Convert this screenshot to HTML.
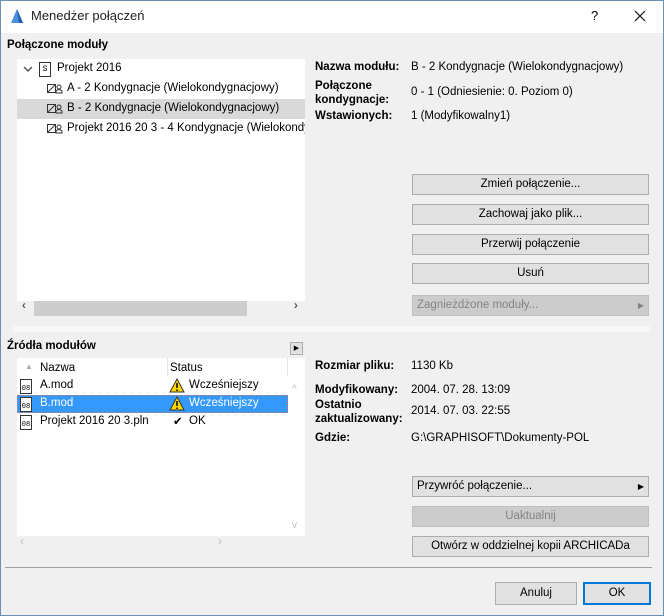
<!DOCTYPE html>
<html><head><meta charset="utf-8"><style>
*{margin:0;padding:0;box-sizing:border-box}
body{width:664px;height:616px;overflow:hidden;background:#f0f0f0;font-family:"Liberation Sans",sans-serif;font-size:11.5px;color:#000;position:relative}
.a{position:absolute;white-space:nowrap}
.win{position:absolute;left:0;top:0;width:664px;height:616px;border:1px solid #6e8fb5}
.b{font-weight:bold}
.btn{position:absolute;left:412px;width:237px;height:21px;background:#e1e1e1;border:1px solid #adadad;text-align:center;line-height:19px}
.dis{background:#cccccc;border-color:#bfbfbf;color:#838383}
.doc{position:absolute;width:12px;height:15px;border:1px solid #333;background:#fff;font-size:7px;line-height:8px;text-align:center;padding-top:5px;font-family:"Liberation Mono",monospace}
</style></head><body>
<div class="win"></div>
<div class="a" style="left:1px;top:1px;width:662px;height:32px;background:#fff"></div>
<svg class="a" style="left:10px;top:8px" width="14" height="16"><path d="M1 15 L7 1 L13 15 Z" fill="#4a8fd8"/><path d="M7 1 L13 15 L9 15 Z" fill="#1c5fae"/></svg>
<div class="a" style="left:31px;top:8px;font-size:13px;color:#222">Menedżer połączeń</div>
<div class="a" style="left:591px;top:8px;font-size:13px">?</div>
<svg class="a" style="left:634px;top:10px" width="12" height="12"><path d="M1 1L11 11M11 1L1 11" stroke="#111" stroke-width="1.2"/></svg>

<div class="a b" style="left:7px;top:39px">Połączone moduły</div>
<div class="a" style="left:17px;top:59px;width:288px;height:242px;background:#fff"></div>
<div class="a" style="left:17px;top:99px;width:288px;height:20px;background:#d9d9d9"></div>
<svg class="a" style="left:23px;top:65px" width="10" height="8"><path d="M1 2L5 6L9 2" stroke="#555" fill="none" stroke-width="1.5"/></svg>
<div class="doc" style="left:39px;top:62px;padding-top:3px;font-size:8px">S</div>
<div class="a" style="left:57px;top:62px">Projekt 2016</div>
<svg class="a" style="left:47px;top:83px" width="16" height="11"><rect x="0.5" y="1.5" width="8" height="8" fill="none" stroke="#333"/><path d="M1 9L8 2" stroke="#333"/><circle cx="12" cy="4" r="2" fill="none" stroke="#333"/><path d="M9 10V8Q12 5 15 8V10Z" fill="none" stroke="#333"/></svg>
<div class="a" style="left:67px;top:82px">A - 2 Kondygnacje (Wielokondygnacjowy)</div>
<svg class="a" style="left:47px;top:103px" width="16" height="11"><rect x="0.5" y="1.5" width="8" height="8" fill="none" stroke="#333"/><path d="M1 9L8 2" stroke="#333"/><circle cx="12" cy="4" r="2" fill="none" stroke="#333"/><path d="M9 10V8Q12 5 15 8V10Z" fill="none" stroke="#333"/></svg>
<div class="a" style="left:67px;top:102px">B - 2 Kondygnacje (Wielokondygnacjowy)</div>
<svg class="a" style="left:47px;top:123px" width="16" height="11"><rect x="0.5" y="1.5" width="8" height="8" fill="none" stroke="#333"/><path d="M1 9L8 2" stroke="#333"/><circle cx="12" cy="4" r="2" fill="none" stroke="#333"/><path d="M9 10V8Q12 5 15 8V10Z" fill="none" stroke="#333"/></svg>
<div class="a" style="left:67px;top:122px;width:238px;overflow:hidden">Projekt 2016 20 3 - 4 Kondygnacje (Wielokondygnacjowy)</div>
<div class="a" style="left:17px;top:301px;width:288px;height:15px;background:#f0f0f0"></div>
<div class="a" style="left:34px;top:301px;width:213px;height:15px;background:#cdcdcd"></div>
<div class="a" style="left:22px;top:300px;color:#555;font-weight:bold">‹</div>
<div class="a" style="left:294px;top:300px;color:#555;font-weight:bold">›</div>

<div class="a b" style="left:315px;top:61px">Nazwa modułu:</div><div class="a" style="left:411px;top:61px">B - 2 Kondygnacje (Wielokondygnacjowy)</div>
<div class="a b" style="left:315px;top:79px;line-height:14px">Połączone<br>kondygnacje:</div><div class="a" style="left:411px;top:86px">0 - 1 (Odniesienie: 0. Poziom 0)</div>
<div class="a b" style="left:315px;top:110px">Wstawionych:</div><div class="a" style="left:411px;top:110px">1 (Modyfikowalny1)</div>

<div class="btn" style="top:174px">Zmień połączenie...</div>
<div class="btn" style="top:204px">Zachowaj jako plik...</div>
<div class="btn" style="top:234px">Przerwij połączenie</div>
<div class="btn" style="top:263px">Usuń</div>
<div class="btn dis" style="top:295px;text-align:left;padding-left:4px">Zagnieżdżone moduły...<span style="position:absolute;right:4px;font-size:8px">▶</span></div>

<div class="a" style="left:13px;top:326px;width:637px;height:6px;background:#f7f7f7"></div>

<div class="a b" style="left:7px;top:340px">Źródła modułów</div>
<div class="a" style="left:290px;top:342px;width:13px;height:13px;background:#e1e1e1;border:1px solid #adadad;font-size:7px;line-height:11px;text-align:center">▶</div>
<div class="a" style="left:17px;top:358px;width:288px;height:178px;background:#fff"></div>
<div class="a" style="left:17px;top:358px;width:271px;height:18px;border-right:1px solid #e5e5e5"></div>
<div class="a" style="left:167px;top:358px;width:1px;height:18px;background:#e5e5e5"></div>
<div class="a" style="left:25px;top:362px;color:#aaa;font-size:8px">▲</div>
<div class="a" style="left:40px;top:362px">Nazwa</div>
<div class="a" style="left:170px;top:362px">Status</div>
<div class="a" style="left:17px;top:395px;width:271px;height:18px;background:#3399ff;border:1px dotted #c77"></div>
<div class="doc" style="left:20px;top:379px">08</div><div class="a" style="left:40px;top:379px">A.mod</div>
<svg class="a" style="left:169px;top:378px" width="16" height="15"><path d="M8 1L15 14H1Z" fill="#ffd800" stroke="#333"/><path d="M8 5V10M8 11.5V13" stroke="#000" stroke-width="1.5"/></svg><div class="a" style="left:189px;top:379px">Wcześniejszy</div>
<div class="doc" style="left:20px;top:397px">08</div><div class="a" style="left:40px;top:397px;color:#fff">B.mod</div>
<svg class="a" style="left:169px;top:396px" width="16" height="15"><path d="M8 1L15 14H1Z" fill="#ffd800" stroke="#333"/><path d="M8 5V10M8 11.5V13" stroke="#000" stroke-width="1.5"/></svg><div class="a" style="left:189px;top:397px;color:#fff">Wcześniejszy</div>
<div class="doc" style="left:20px;top:415px">08</div><div class="a" style="left:40px;top:415px">Projekt 2016 20 3.pln</div>
<div class="a" style="left:173px;top:414px">✔</div><div class="a" style="left:189px;top:415px">OK</div>
<div class="a" style="left:292px;top:384px;color:#bbb;font-size:10px">^</div>
<div class="a" style="left:292px;top:520px;color:#bbb;font-size:10px">v</div>
<div class="a" style="left:20px;top:536px;color:#bbb">‹</div>
<div class="a" style="left:218px;top:536px;color:#bbb">›</div>

<div class="a b" style="left:315px;top:360px">Rozmiar pliku:</div><div class="a" style="left:411px;top:360px">1130 Kb</div>
<div class="a b" style="left:315px;top:384px">Modyfikowany:</div><div class="a" style="left:411px;top:384px">2004. 07. 28. 13:09</div>
<div class="a b" style="left:315px;top:398px;line-height:14px">Ostatnio<br>zaktualizowany:</div><div class="a" style="left:411px;top:405px">2014. 07. 03. 22:55</div>
<div class="a b" style="left:315px;top:432px">Gdzie:</div><div class="a" style="left:411px;top:432px">G:\GRAPHISOFT\Dokumenty-POL</div>

<div class="btn" style="top:476px;text-align:left;padding-left:4px">Przywróć połączenie...<span style="position:absolute;right:4px;font-size:8px">▶</span></div>
<div class="btn dis" style="top:506px">Uaktualnij</div>
<div class="btn" style="top:536px">Otwórz w oddzielnej kopii ARCHICADa</div>

<div class="a" style="left:5px;top:567px;width:647px;height:1px;background:#a0a0a0"></div>
<div class="a" style="left:495px;top:582px;width:82px;height:23px;background:#e1e1e1;border:1px solid #adadad;text-align:center;line-height:21px">Anuluj</div>
<div class="a" style="left:583px;top:582px;width:68px;height:23px;background:#e1e1e1;border:2px solid #0078d7;text-align:center;line-height:19px">OK</div>
</body></html>
